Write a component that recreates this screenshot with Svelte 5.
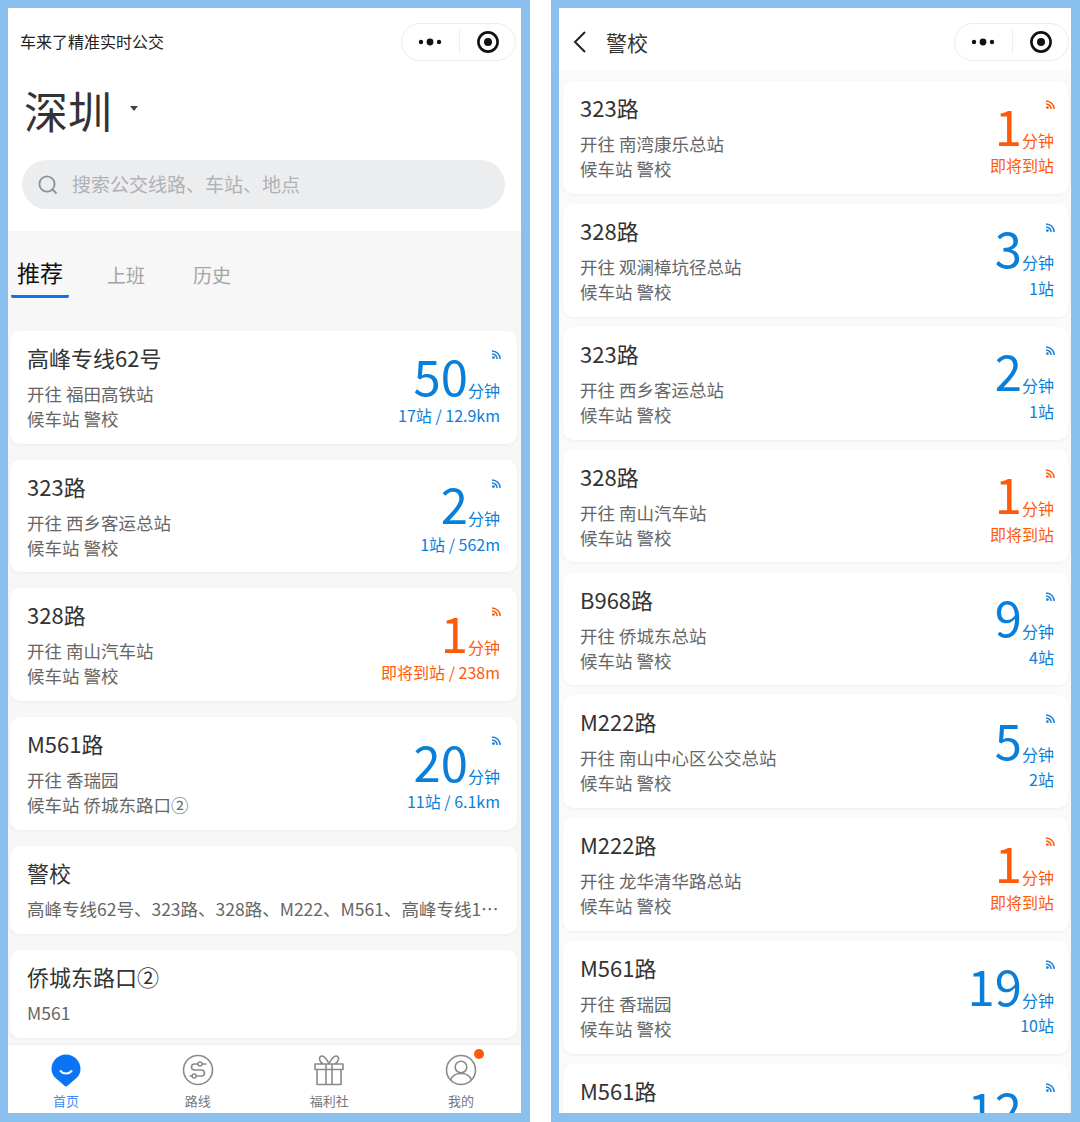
<script>
	const homeCards = [
		{ line: '高峰专线62号', to: '福田高铁站', stop: '警校', min: 50, info: '17站 / 12.9km' },
		{ line: '323路', to: '西乡客运总站', stop: '警校', min: 2, info: '1站 / 562m' },
		{ line: '328路', to: '南山汽车站', stop: '警校', min: 1, info: '即将到站 / 238m', soon: true },
		{ line: 'M561路', to: '香瑞园', stop: '侨城东路口②', min: 20, info: '11站 / 6.1km' }
	];

	const stopCards = [
		{ line: '323路', to: '南湾康乐总站', stop: '警校', min: 1, info: '即将到站', soon: true },
		{ line: '328路', to: '观澜樟坑径总站', stop: '警校', min: 3, info: '1站' },
		{ line: '323路', to: '西乡客运总站', stop: '警校', min: 2, info: '1站' },
		{ line: '328路', to: '南山汽车站', stop: '警校', min: 1, info: '即将到站', soon: true },
		{ line: 'B968路', to: '侨城东总站', stop: '警校', min: 9, info: '4站' },
		{ line: 'M222路', to: '南山中心区公交总站', stop: '警校', min: 5, info: '2站' },
		{ line: 'M222路', to: '龙华清华路总站', stop: '警校', min: 1, info: '即将到站', soon: true },
		{ line: 'M561路', to: '香瑞园', stop: '警校', min: 19, info: '10站' },
		{ line: 'M561路', to: '香瑞园', stop: '警校', min: 12, info: '7站' }
	];
</script>

{#snippet capsule()}
	<div class="capsule">
		<svg width="24" height="8" viewBox="0 0 24 8"><circle cx="3" cy="4" r="2.200" /><circle cx="12" cy="4" r="3.400" /><circle cx="21" cy="4" r="2.200" /></svg>
		<span class="sep"></span>
		<svg width="22" height="22" viewBox="0 0 22 22"><circle cx="11" cy="11" r="9.600" fill="none" stroke="#111" stroke-width="2.600" /><circle cx="11" cy="11" r="4" /></svg>
	</div>
{/snippet}

{#snippet busCard(c)}
	<div class="card bus" class:soon={c.soon}>
		<div class="left">
			<div class="title">{c.line}</div>
			<div class="desc">开往 {c.to}</div>
			<div class="desc">候车站 {c.stop}</div>
		</div>
		<div class="right">
			<svg class="rss" width="9" height="9" viewBox="0 0 9 9">
				<circle cx="1.400" cy="7.600" r="1.400" class="fill" />
				<path d="M0 3.900a5.100 5.100 0 0 1 5.100 5.100M0 .9a8.100 8.100 0 0 1 8.100 8.100" fill="none" stroke-width="1.500" />
			</svg>
			<div class="time"><span class="num">{c.min}</span><span class="unit">分钟</span></div>
			<div class="info">{c.info}</div>
		</div>
	</div>
{/snippet}

<div class="page">
	<div class="phone">
		<div class="nav">
			<span class="app-name">车来了精准实时公交</span>
			{@render capsule()}
		</div>
		<div class="city">
			<span>深圳</span>
			<i class="caret"></i>
		</div>
		<div class="search-wrap">
			<div class="search">
				<svg width="20" height="20" viewBox="0 0 20 20" fill="none" stroke="#8f9499" stroke-width="1.900"><circle cx="9" cy="9" r="7.600" /><path d="M14.500 14.500 18.500 18.500" /></svg>
				<span>搜索公交线路、车站、地点</span>
			</div>
		</div>
		<div class="body">
			<div class="tabs">
				<div class="tab active">推荐</div>
				<div class="tab">上班</div>
				<div class="tab">历史</div>
			</div>
			<div class="list">
				{#each homeCards as c}
					{@render busCard(c)}
				{/each}
				<div class="card stop">
					<div class="title">警校</div>
					<div class="desc ellipsis">高峰专线62号、323路、328路、M222、M561、高峰专线1号、高峰专线2号</div>
				</div>
				<div class="card stop">
					<div class="title">侨城东路口②</div>
					<div class="desc">M561</div>
				</div>
			</div>
		</div>
		<div class="tabbar">
			<div class="item on">
				<svg width="30" height="33" viewBox="0 0 30 33"><path d="M15 32.500c-.6 0-1-.3-1.500-.8L4.500 24C1.800 21.300.5 18.300.5 15 .5 7 7 .5 15 .5S29.500 7 29.500 15c0 3.300-1.300 6.300-4 9l-9 7.700c-.5.5-.9.8-1.500.8z" fill="#0a74f5" /><path d="M9.500 17c2.800 3.400 8.200 3.400 11 0" fill="none" stroke="#fff" stroke-width="2" stroke-linecap="round" /></svg>
				<span>首页</span>
			</div>
			<div class="item">
				<svg width="32" height="33" viewBox="0 0 32 33" fill="none" stroke="#8a8a8a" stroke-width="1.600"><circle cx="16" cy="16" r="14.500" /><path d="M16 10h-3.500a3 3 0 0 0 0 6h7a3 3 0 0 1 0 6H14.500M20 10h4.500M7.500 22H10" /><circle cx="18" cy="10" r="2" /><circle cx="12.200" cy="22" r="2" /></svg>
				<span>路线</span>
			</div>
			<div class="item">
				<svg width="32" height="33" viewBox="0 0 32 33" fill="none" stroke="#8a8a8a" stroke-width="1.600" stroke-linejoin="round"><path d="M2 10h28v5.500H2zM4 15.500h24V30.500H4zM13 10v20.500M19 10v20.500M16 9.500C13 3.500 9.500 1 7.500 2.500 5.500 4 6.500 8 10 9.800M16 9.500C19 3.500 22.500 1 24.500 2.500 26.500 4 25.500 8 22 9.800" /></svg>
				<span>福利社</span>
			</div>
			<div class="item">
				<div class="avatar">
					<svg width="32" height="33" viewBox="0 0 32 33" fill="none" stroke="#8a8a8a" stroke-width="1.600"><circle cx="16" cy="16" r="14.500" /><circle cx="16" cy="13" r="5.800" /><path d="M5.500 26c1.500-4 5.500-6.500 10.500-6.500s9 2.500 10.500 6.500" /></svg>
					<i class="dot"></i>
				</div>
				<span>我的</span>
			</div>
		</div>
	</div>

	<div class="phone second">
		<div class="nav">
			<svg class="back" width="14" height="24" viewBox="0 0 14 24" fill="none" stroke="#222" stroke-width="2"><path d="M12 2 2 12l10 10" /></svg>
			<span class="nav-title">警校</span>
			{@render capsule()}
		</div>
		<div class="body stops">
			{#each stopCards as c}
				{@render busCard(c)}
			{/each}
		</div>
	</div>
</div>

<style>
	:global(body) {
		background: #fff;
	}
	.page {
		display: flex;
		justify-content: space-between;
		width: 1080px;
		height: 1122px;
		font-family: 'Noto Sans CJK SC', 'Noto Sans', sans-serif;
		color: #333;
	}
	.phone {
		box-sizing: border-box;
		width: 530px;
		height: 1122px;
		border: 8px solid #8ac0ee;
		border-right-width: 9px;
		border-bottom-width: 9px;
		background: #fff;
		display: flex;
		flex-direction: column;
		overflow: hidden;
	}
	.phone.second {
		width: 529px;
	}
	.nav {
		flex: none;
		box-sizing: border-box;
		height: 63px;
		display: flex;
		align-items: center;
		padding: 2px 5px 0 12px;
	}
	.second .nav {
		padding: 2px 2px 0 14px;
	}
	.app-name {
		flex: 1;
		font-size: 16px;
		color: #222;
		margin-top: 1px;
	}
	.back {
		margin: 2px 19px 0 0;
	}
	.nav-title {
		flex: 1;
		font-size: 21px;
		color: #333;
		margin-top: 2px;
	}
	.capsule {
		box-sizing: border-box;
		width: 115px;
		height: 38px;
		border: 1px solid #ececec;
		border-radius: 19px;
		display: flex;
		align-items: center;
		justify-content: space-between;
		padding: 0 16px;
		margin-top: 2px;
	}
	.capsule svg {
		fill: #111;
	}
	.sep {
		width: 1px;
		height: 24px;
		background: #eee;
	}
	.city {
		flex: none;
		box-sizing: border-box;
		height: 88px;
		display: flex;
		align-items: center;
		padding: 0 0 10px 16px;
		font-size: 44px;
		color: #333;
		line-height: 1;
	}
	.caret {
		width: 0;
		height: 0;
		border: 4.500px solid transparent;
		border-top: 5px solid #444;
		border-bottom: 0;
		margin: 0 0 4px 18px;
	}
	.search-wrap {
		flex: none;
		height: 72px;
		padding: 1px 16px 0 14px;
		box-sizing: border-box;
	}
	.search {
		height: 49px;
		border-radius: 25px;
		background: #ecedef;
		display: flex;
		align-items: center;
		padding-left: 16px;
		gap: 14px;
		font-size: 19px;
		color: #b0b2b5;
	}
	.search span {
		margin-top: -2px;
	}
	.body {
		flex: 1;
		min-height: 0;
		background: #f7f7f7;
		overflow: hidden;
	}
	.body.stops {
		background: #fafafa;
		padding: 10px 2px 0 4px;
		display: flex;
		flex-direction: column;
		gap: 10.100px;
	}
	.tabs {
		display: flex;
		height: 67px;
		padding: 21px 0 0 3px;
		box-sizing: border-box;
		margin-bottom: 33px;
		align-items: flex-end;
	}
	.tab {
		width: 60px;
		margin-right: 26px;
		padding-bottom: 3px;
		text-align: center;
		font-size: 19px;
		line-height: 40px;
		color: #a4a4a4;
		box-sizing: border-box;
	}
	.tab.active {
		width: 58px;
		font-size: 23px;
		color: #111;
		border-bottom: 3px solid #0a74f5;
		border-radius: 0 0 2px 2px;
		margin-right: 27px;
	}
	.list {
		display: flex;
		flex-direction: column;
		gap: 15.900px;
		padding: 0 4px 0 2px;
	}
	.card {
		flex: none;
		background: #fff;
		border-radius: 10px;
		box-shadow: 0 1px 3px rgba(0, 0, 0, 0.05);
	}
	.bus {
		box-sizing: border-box;
		height: 112.800px;
		display: flex;
		justify-content: space-between;
		padding: 0 17px;
	}
	.second .bus {
		padding-right: 15px;
	}
	.left {
		padding-top: 10px;
	}
	.title {
		font-size: 22px;
		line-height: 32px;
		color: #333;
	}
	.desc {
		font-size: 17.500px;
		line-height: 25px;
		color: #666;
	}
	.left .title {
		margin-bottom: 8px;
	}
	.right {
		display: flex;
		flex-direction: column;
		align-items: flex-end;
		color: #0a7fd9;
	}
	.rss {
		margin-top: 19px;
		margin-right: -1px;
		stroke: #1a80d8;
	}
	.rss .fill {
		fill: #1a80d8;
		stroke: none;
	}
	.soon .rss {
		stroke: #ff5a0a;
	}
	.soon .rss .fill {
		fill: #ff5a0a;
	}
	.soon .right {
		color: #ff5a0a;
	}
	.time {
		display: flex;
		align-items: baseline;
		height: 50px;
		line-height: 50px;
		margin-top: -9.500px;
	}
	.num {
		font-size: 49px;
	}
	.unit {
		font-size: 16px;
		position: relative;
		top: 1px;
	}
	.info {
		font-size: 16px;
		line-height: 24px;
		margin-top: 3.500px;
	}
	.stop {
		box-sizing: border-box;
		height: 88px;
		padding: 10px 17px 0;
	}
	.stop .title {
		margin-bottom: 8px;
	}
	.ellipsis {
		white-space: nowrap;
		overflow: hidden;
		text-overflow: ellipsis;
	}
	.tabbar {
		flex: none;
		height: 68px;
		background: #fff;
		display: flex;
		justify-content: space-between;
		padding: 0 20px 0 18px;
		box-shadow: 0 -1px 2px rgba(0, 0, 0, 0.04);
		position: relative;
	}
	.item {
		width: 80px;
		display: flex;
		flex-direction: column;
		align-items: center;
		justify-content: flex-end;
		font-size: 13px;
		color: #777;
		line-height: 18px;
		padding-bottom: 3px;
		gap: 5px;
	}
	.item.on {
		color: #3d8ef0;
	}
	.avatar {
		position: relative;
		height: 33px;
	}
	.avatar svg {
		display: block;
	}
	.dot {
		position: absolute;
		right: -7px;
		top: -5px;
		width: 10px;
		height: 10px;
		border-radius: 50%;
		background: #ff5a0a;
	}
</style>
